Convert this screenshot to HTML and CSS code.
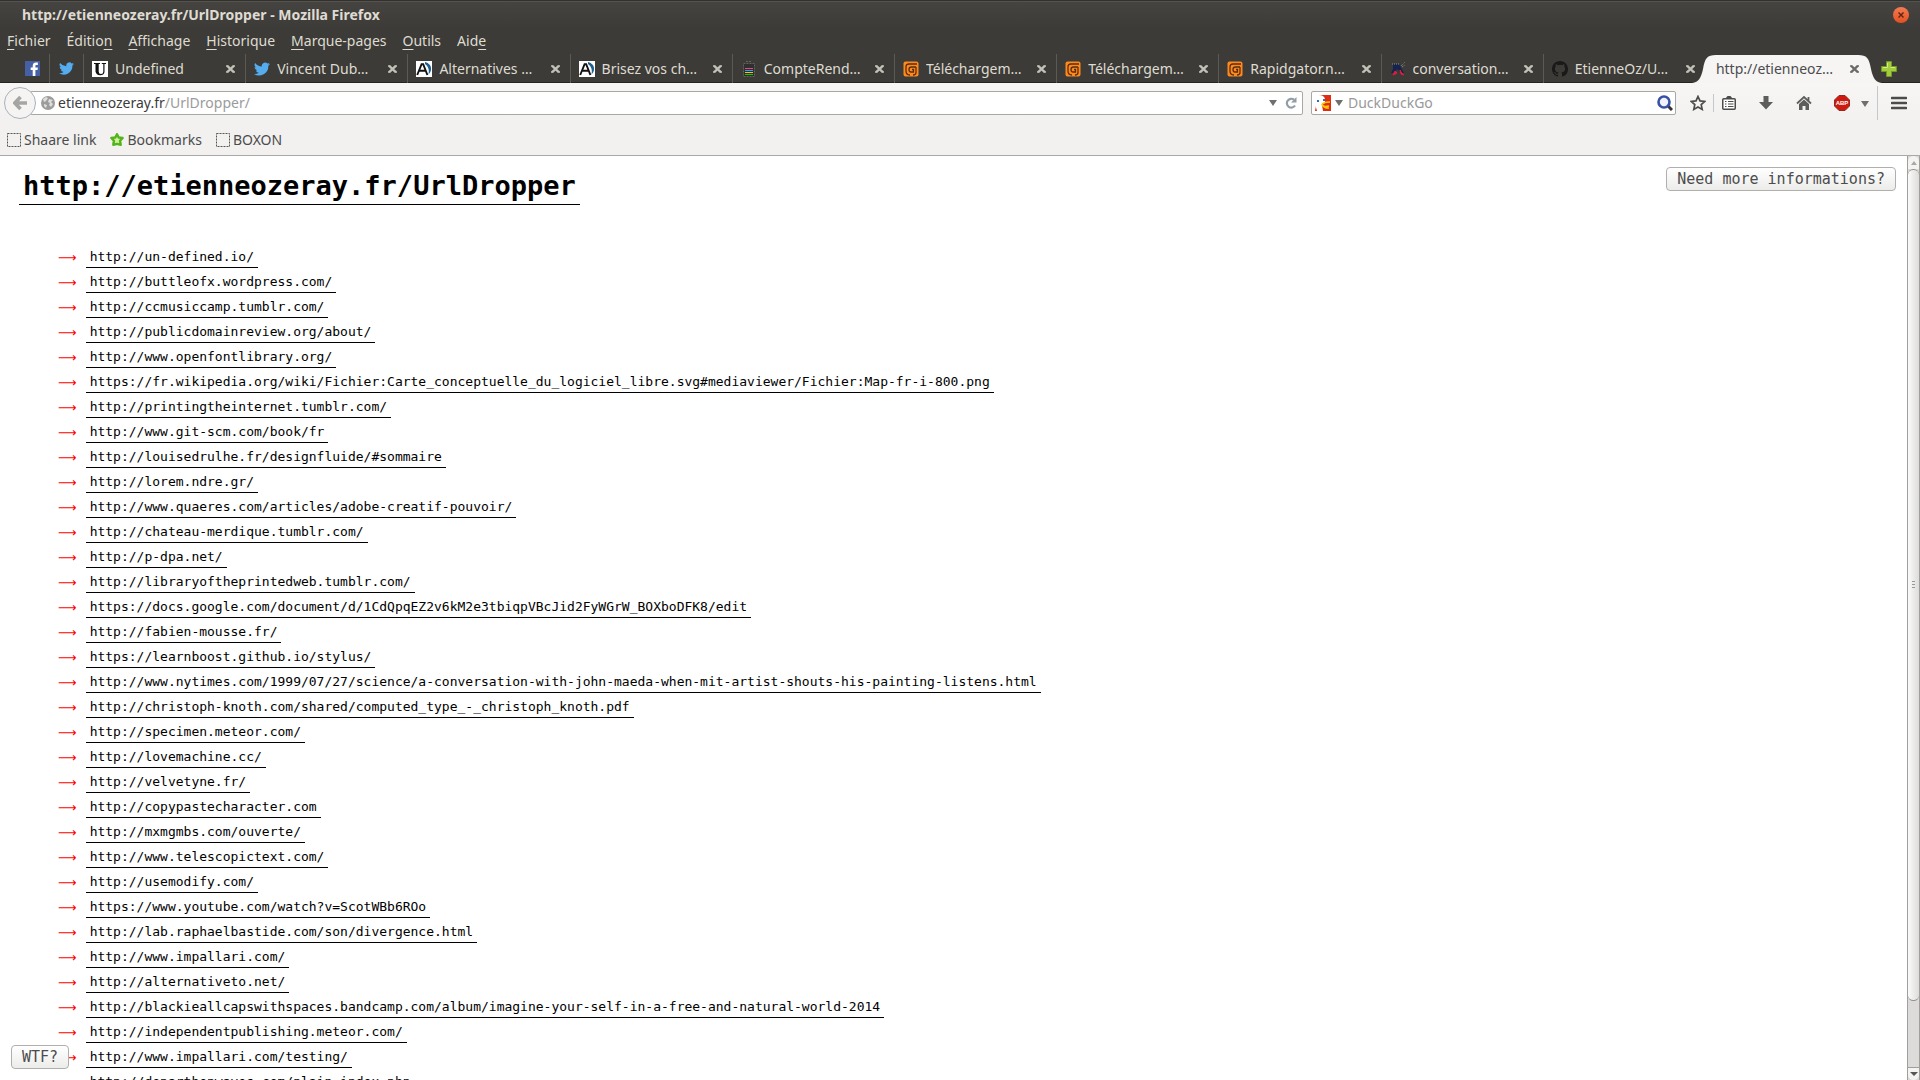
FILE: index.html
```html
<!DOCTYPE html>
<html lang="fr">
<head>
<meta charset="utf-8">
<title>http://etienneozeray.fr/UrlDropper - Mozilla Firefox</title>
<link rel="stylesheet" href="styles.css">
</head>
<body>
<svg class="defs" aria-hidden="true">
  <defs>
    <symbol id="close" viewBox="0 0 9 8"><path d="M1.2 .8 7.8 7.2M7.8 .8 1.2 7.2" stroke="currentColor" stroke-width="2.3"/><path d="M0 1h2M7 1h2M0 7h2M7 7h2" stroke="currentColor" stroke-width="1.6"/></symbol>
    <symbol id="twitter" viewBox="0 0 24 24"><path fill="#55acee" d="M24 4.6a10 10 0 0 1-2.8.8 5 5 0 0 0 2.1-2.7 10 10 0 0 1-3.1 1.2 4.9 4.9 0 0 0-8.4 4.5A14 14 0 0 1 1.7 3.1a4.9 4.9 0 0 0 1.5 6.6 4.9 4.9 0 0 1-2.2-.6v.1a4.9 4.9 0 0 0 3.9 4.8 5 5 0 0 1-2.2.1 4.9 4.9 0 0 0 4.6 3.4A9.9 9.9 0 0 1 0 19.5 14 14 0 0 0 21.5 7.1 10 10 0 0 0 24 4.6z"/></symbol>
    <symbol id="april" viewBox="0 0 16 16"><path fill="#fff" d="M0 0h16v16H0z"/><path d="M1.2 14 5.6 3.2h1.6L11.4 14M3.4 9.8h6" fill="none" stroke="#111" stroke-width="1.9"/><path fill="#1c5f92" d="M9 1c4 1 6.500 4 6 7.500-.2 2-1 3.500-2.500 5 1-4.500 0-8-3.500-10.500z"/></symbol>
    <symbol id="gator" viewBox="0 0 16 16"><rect x=".5" y=".5" width="15" height="15" rx="2" fill="#ff8a1c"/><path d="M14 3H6Q3 3 3 6v4q0 4 4 4M13 6H8.500Q6 6 6 8.500T8 11h2.500V8.500H9M13 6v5.500q0 2.500-3 2.500" fill="none" stroke="#5a2c10" stroke-width="1.3"/></symbol>
    <symbol id="down" viewBox="0 0 8 6"><path d="M0 0h8L4 6z" fill="#6f6f6c"/></symbol>
  </defs>
</svg>

<header class="chrome">
  <div class="titlebar">
    <span class="title">http://etienneozeray.fr/UrlDropper - Mozilla Firefox</span>
    <button class="window-close" aria-label="Fermer la fenêtre"><svg viewBox="0 0 16 16"><path d="M5.500 5.500l5 5M10.500 5.500l-5 5" stroke="#5b2415" stroke-width="1.4"/></svg></button>
  </div>
  <nav class="menubar">
    <button><u>F</u>ichier</button>
    <button>Éditio<u>n</u></button>
    <button><u>A</u>ffichage</button>
    <button><u>H</u>istorique</button>
    <button><u>M</u>arque-pages</button>
    <button><u>O</u>utils</button>
    <button>Aid<u>e</u></button>
  </nav>
  <div class="tabs">
    <button class="pinned first" aria-label="Facebook"><svg viewBox="0 0 14 14"><path fill="#4560a5" d="M0 0h14v14H0z"/><path fill="#fff" d="M7.200 14V8.300H5.300V6.100h1.900V4.600c0-2 1.200-3.100 3-3.100h1.800v2.200h-1.200c-.9 0-1.100.4-1.100 1.100v1.300H12l-.3 2.200h-2V14z"/></svg></button>
    <button class="pinned" aria-label="Twitter"><svg><use href="#twitter"/></svg></button>
    <div class="tab"><svg class="favicon" viewBox="0 0 16 16"><path fill="#fff" d="M0 0h16v16H0z"/><path fill="#111" d="M2 2h6v1H6.700v7.500q0 2.500 2.300 2.500t2.300-2.500V3H9.800V2H14v1h-1.500v7.500Q12.500 14.200 8.300 14.200T3.500 10.500V3H2z"/></svg><button class="label">Undefined</button><button class="close" aria-label="Fermer"><svg><use href="#close"/></svg></button></div>
    <div class="tab"><svg class="favicon"><use href="#twitter"/></svg><button class="label">Vincent Dub…</button><button class="close" aria-label="Fermer"><svg><use href="#close"/></svg></button></div>
    <div class="tab"><svg class="favicon"><use href="#april"/></svg><button class="label">Alternatives …</button><button class="close" aria-label="Fermer"><svg><use href="#close"/></svg></button></div>
    <div class="tab"><svg class="favicon"><use href="#april"/></svg><button class="label">Brisez vos ch…</button><button class="close" aria-label="Fermer"><svg><use href="#close"/></svg></button></div>
    <div class="tab"><svg class="favicon" viewBox="0 0 16 16"><path d="M2.500 2.500h11v13h-11zM5 .5h6" fill="#2f2f2d" stroke="#62625e" stroke-dasharray="2 1"/><path d="M4 7.500h8" stroke="#f0408c"/><path d="M4 9.500h8" stroke="#19a8f0"/><path d="M4 11.500h8" stroke="#f5c211"/><path d="M4 13.500h8" stroke="#16c60c"/></svg><button class="label">CompteRend…</button><button class="close" aria-label="Fermer"><svg><use href="#close"/></svg></button></div>
    <div class="tab"><svg class="favicon"><use href="#gator"/></svg><button class="label">Téléchargem…</button><button class="close" aria-label="Fermer"><svg><use href="#close"/></svg></button></div>
    <div class="tab"><svg class="favicon"><use href="#gator"/></svg><button class="label">Téléchargem…</button><button class="close" aria-label="Fermer"><svg><use href="#close"/></svg></button></div>
    <div class="tab"><svg class="favicon"><use href="#gator"/></svg><button class="label">Rapidgator.n…</button><button class="close" aria-label="Fermer"><svg><use href="#close"/></svg></button></div>
    <div class="tab"><svg class="favicon" viewBox="0 0 16 16"><path d="M3 3h6l5 9h-3L7 8l-3 4H1l2-4z" fill="#14244f"/><path d="M2 3h8M11 5l4-4M12 6l3-2" stroke="#8b8d92" stroke-dasharray="1 1"/><path d="M3 14l2-4 2 2zM10 9l1 2 3 3-3-1z" fill="#e8173d" stroke="#e8173d"/></svg><button class="label">conversation…</button><button class="close" aria-label="Fermer"><svg><use href="#close"/></svg></button></div>
    <div class="tab"><svg class="favicon" viewBox="0 0 16 16"><path fill="#191919" d="M8 0C3.580 0 0 3.580 0 8c0 3.540 2.290 6.530 5.470 7.590.4.070.55-.17.55-.38 0-.19-.01-.82-.01-1.490-2.010.37-2.530-.49-2.690-.94-.09-.23-.48-.94-.82-1.130-.28-.15-.68-.52-.01-.53.63-.01 1.080.58 1.230.82.72 1.210 1.870.87 2.330.66.07-.52.28-.87.51-1.070-1.780-.2-3.640-.89-3.640-3.950 0-.87.31-1.590.82-2.150-.08-.2-.36-1.020.08-2.120 0 0 .67-.21 2.200.82a7.600 7.600 0 0 1 4 0c1.530-1.040 2.200-.82 2.200-.82.44 1.100.16 1.920.08 2.120.51.56.82 1.270.82 2.150 0 3.070-1.870 3.750-3.650 3.950.29.25.54.73.54 1.480 0 1.070-.01 1.930-.01 2.200 0 .21.15.46.55.38A8 8 0 0 0 16 8c0-4.420-3.580-8-8-8z"/></svg><button class="label">EtienneOz/U…</button><button class="close" aria-label="Fermer"><svg><use href="#close"/></svg></button></div>
    <div class="tab active">
      <svg class="curve left" viewBox="0 0 24 29"><path fill="#f6f5f4" d="M0 29C7 28 9 24 11 15 13 4 15 1 24 1V29z"/></svg>
      <svg class="curve right" viewBox="0 0 24 29"><path fill="#f6f5f4" d="M24 29C17 28 15 24 13 15 11 4 9 1 0 1V29z"/></svg>
      <button class="label">http://etienneoz…</button><button class="close" aria-label="Fermer"><svg><use href="#close"/></svg></button>
    </div>
    <button class="new-tab" aria-label="Nouvel onglet"><svg viewBox="0 0 16 16"><path d="M5.500.5h5v5h5v5h-5v5h-5v-5h-5v-5h5z" fill="#a2cc3d" stroke="#6f9a23"/><path d="M6.500 2v4.500H2M14 6.500h-4.500" fill="none" stroke="#d3ea86"/></svg></button>
  </div>
</header>

<div class="toolbar">
  <button class="back" aria-label="Précédent"><svg viewBox="0 0 14 14"><path d="M7.500 1 1.700 7l5.800 6M2 7h12" fill="none" stroke="#a5a5a4" stroke-width="3.600"/></svg></button>
  <div class="urlbar">
    <svg class="globe" viewBox="0 0 14 14"><circle cx="7" cy="7" r="7" fill="#9c9c9b"/><path d="M2 3l3-2 2 1-2 3-2 1zM3 8l3 1-1 3-2-2zM8 3l4 1-2 2 2 2-2 3-2-2 1-2-2-1z" fill="#dededd"/></svg>
    <span class="address" role="textbox" aria-label="Adresse">etienneozeray.fr<span class="path">/UrlDropper/</span></span>
    <svg class="drop"><use href="#down"/></svg>
    <button class="reload" aria-label="Actualiser"><svg viewBox="0 0 12 12"><path d="M10 8.500A4.400 4.400 0 1 1 9 2.700" fill="none" stroke="#929ca6" stroke-width="2.200"/><path d="M11.500 0v5.500H6z" fill="#929ca6"/></svg></button>
  </div>
  <div class="searchbar">
    <svg class="duck" viewBox="0 0 16 16"><path fill="#e02c12" d="M1 0h15v16H1z"/><path fill="#fff" d="M0 0h4q5 0 6 4v4l-3 2 1 6H2L0 9z"/><path fill="#e02c12" d="M0 11l1 5H0z"/><path fill="#2a6fc4" d="M2 5h2v2H2zM8 4h2v2H8z"/><path d="M15 7q-7 0-8 2.500 1 3 7 1.500M7 10q3 3.500 7 3" fill="none" stroke="#ffc800" stroke-width="1.600"/></svg>
    <svg class="drop"><use href="#down"/></svg>
    <input type="text" placeholder="DuckDuckGo" aria-label="Rechercher">
    <button class="search" aria-label="Rechercher"><svg viewBox="0 0 16 16"><path d="M11 11l4 4" stroke="#333" stroke-width="3"/><circle cx="7" cy="7" r="5.500" fill="#eef3fb" stroke="#3b50a4" stroke-width="2.600"/></svg></button>
  </div>
  <div class="tools">
    <button aria-label="Marquer cette page"><svg viewBox="0 0 16 16"><path d="M8 1.500l2 4.400 4.800.5-3.600 3.200 1 4.800L8 12l-4.200 2.400 1-4.800L1.200 6.400 6 5.900z" fill="none" stroke="#4c4c4b" stroke-width="1.700"/></svg></button>
    <button class="split" aria-label="Marque-pages"><svg viewBox="0 0 16 16"><rect x="1.750" y="3.750" width="12.500" height="10.500" rx="1" fill="#fff" stroke="#4c4c4b" stroke-width="1.500"/><path d="M4.500 3.500 6.500 1h3l2 2.500z" fill="#4c4c4b"/><path d="M4 6.500h1.500M7 6.500h5.500M4 9h1.500M7 9h5.500M4 11.500h1.500M7 11.500h5.500" stroke="#4c4c4b"/></svg></button>
    <button aria-label="Téléchargements"><svg viewBox="0 0 16 16"><path d="M5.500 1h5v6H15l-7 7.500L1 7h4.500z" fill="#5d5d5c"/></svg></button>
    <button aria-label="Accueil"><svg viewBox="0 0 16 16"><path d="M1 8.500 8 2l7 6.500M12.500 2v4" fill="none" stroke="#5d5d5c" stroke-width="1.800"/><path d="M3 9l5-4.500L13 9v6H9.500v-4h-3v4H3z" fill="#5d5d5c"/></svg></button>
    <button aria-label="Adblock Plus"><svg viewBox="0 0 16 16"><path d="M5 .5h6L15.500 5v6L11 15.500H5L.5 11V5z" fill="#cf1b0e" stroke="#8f2c22"/><text x="8" y="10" class="abp">ABP</text></svg></button>
    <svg class="drop"><use href="#down"/></svg>
    <button class="menu" aria-label="Ouvrir le menu"><svg viewBox="0 0 16 14"><path d="M1 2h14M1 7h14M1 12h14" stroke="#4c4c4b" stroke-width="2.600" stroke-linecap="round"/></svg></button>
  </div>
</div>

<nav class="bookmarks">
  <a href="#"><svg viewBox="0 0 14 14"><rect x=".5" y=".5" width="13" height="13" fill="none" stroke="#555" stroke-dasharray="2 1"/></svg>Shaare link</a>
  <a href="#"><svg viewBox="0 0 14 14"><path d="M7 1.200l1.700 3.300 3.900.5-2.500 2.800.6 4L7 10.800l-3.700 1 .6-4L1.400 5l3.900-.5z" fill="#cdf09b" stroke="#53b31b" stroke-width="2.400" stroke-linejoin="round"/></svg>Bookmarks</a>
  <a href="#"><svg viewBox="0 0 14 14"><rect x=".5" y=".5" width="13" height="13" fill="none" stroke="#555" stroke-dasharray="2 1"/></svg>BOXON</a>
</nav>

<div class="viewport">
  <main class="page">
    <h1><a href="#">http://etienneozeray.fr/UrlDropper</a></h1>
    <button class="page-button info">Need more informations?</button>
    <ul class="links">
      <li><a href="#">http://un-defined.io/</a></li>
      <li><a href="#">http://buttleofx.wordpress.com/</a></li>
      <li><a href="#">http://ccmusiccamp.tumblr.com/</a></li>
      <li><a href="#">http://publicdomainreview.org/about/</a></li>
      <li><a href="#">http://www.openfontlibrary.org/</a></li>
      <li><a href="#">https://fr.wikipedia.org/wiki/Fichier:Carte_conceptuelle_du_logiciel_libre.svg#mediaviewer/Fichier:Map-fr-i-800.png</a></li>
      <li><a href="#">http://printingtheinternet.tumblr.com/</a></li>
      <li><a href="#">http://www.git-scm.com/book/fr</a></li>
      <li><a href="#">http://louisedrulhe.fr/designfluide/#sommaire</a></li>
      <li><a href="#">http://lorem.ndre.gr/</a></li>
      <li><a href="#">http://www.quaeres.com/articles/adobe-creatif-pouvoir/</a></li>
      <li><a href="#">http://chateau-merdique.tumblr.com/</a></li>
      <li><a href="#">http://p-dpa.net/</a></li>
      <li><a href="#">http://libraryoftheprintedweb.tumblr.com/</a></li>
      <li><a href="#">https://docs.google.com/document/d/1CdQpqEZ2v6kM2e3tbiqpVBcJid2FyWGrW_BOXboDFK8/edit</a></li>
      <li><a href="#">http://fabien-mousse.fr/</a></li>
      <li><a href="#">https://learnboost.github.io/stylus/</a></li>
      <li><a href="#">http://www.nytimes.com/1999/07/27/science/a-conversation-with-john-maeda-when-mit-artist-shouts-his-painting-listens.html</a></li>
      <li><a href="#">http://christoph-knoth.com/shared/computed_type_-_christoph_knoth.pdf</a></li>
      <li><a href="#">http://specimen.meteor.com/</a></li>
      <li><a href="#">http://lovemachine.cc/</a></li>
      <li><a href="#">http://velvetyne.fr/</a></li>
      <li><a href="#">http://copypastecharacter.com</a></li>
      <li><a href="#">http://mxmgmbs.com/ouverte/</a></li>
      <li><a href="#">http://www.telescopictext.com/</a></li>
      <li><a href="#">http://usemodify.com/</a></li>
      <li><a href="#">https://www.youtube.com/watch?v=ScotWBb6ROo</a></li>
      <li><a href="#">http://lab.raphaelbastide.com/son/divergence.html</a></li>
      <li><a href="#">http://www.impallari.com/</a></li>
      <li><a href="#">http://alternativeto.net/</a></li>
      <li><a href="#">http://blackieallcapswithspaces.bandcamp.com/album/imagine-your-self-in-a-free-and-natural-world-2014</a></li>
      <li><a href="#">http://independentpublishing.meteor.com/</a></li>
      <li><a href="#">http://www.impallari.com/testing/</a></li>
      <li><a href="#">http://departhenwaves.com/plain_index.php</a></li>
    </ul>
    <button class="page-button wtf">WTF?</button>
  </main>
  <div class="scrollbar" aria-hidden="true">
    <span class="arrow up"><svg viewBox="0 0 8 6"><path d="M1 5h6L4 1z" fill="#aaa9a6"/></svg></span>
    <span class="thumb"><i></i><i></i><i></i></span>
    <span class="arrow bottom"><svg viewBox="0 0 8 6"><path d="M0 1h8L4 5z" fill="#555"/></svg></span>
  </div>
</div>
</body>
</html>
```

FILE: styles.css
```css
* { box-sizing: border-box; }

body {
  margin: 0;
  height: 100vh;
  display: flex;
  flex-direction: column;
  overflow: hidden;
  background: #fff;
  color: #4c4c4c;
  font: 14px/20px "Noto Sans", "Open Sans", sans-serif;
}

button {
  margin: 0;
  padding: 0;
  border: 0;
  background: none;
  color: inherit;
  font: inherit;
}

svg { display: block; flex: none; }
.defs { position: absolute; width: 0; height: 0; }

/* Window frame */
.chrome {
  flex: none;
  color: #dfdbd2;
  background: linear-gradient(#454440, #3c3b37 28px);
  border-top: 1px solid #32312e;
}

.titlebar {
  display: flex;
  justify-content: space-between;
  align-items: center;
  height: 26px;
  padding: 0 11px 0 22px;
  border-top: 1px solid #53524d;
}
.title { font-weight: 700; }
.window-close {
  width: 16px;
  height: 16px;
  border-radius: 50%;
  background: linear-gradient(#f47b55, #e2501f);
}

.menubar {
  display: flex;
  gap: 16px;
  height: 27px;
  padding: 0 7px;
}
.menubar u { text-underline-offset: 3px; }

/* Tabs */
.tabs {
  display: flex;
  height: 29px;
  padding-right: 23px;
  box-shadow: inset 0 -1px #262522;
}
.pinned {
  display: flex;
  align-items: center;
  justify-content: center;
  width: 34px;
}
.pinned.first { width: 49px; padding-left: 15px; }
.pinned svg { width: 15px; height: 15px; }
.pinned + .pinned, .tab {
  border-left: 1px solid #5b5a55;
}
.tab {
  position: relative;
  display: flex;
  align-items: center;
  flex: 1 1 0;
  min-width: 0;
  padding: 0 10px 0 8px;
}
.favicon { width: 16px; height: 16px; margin-right: 7px; }
.label {
  flex: 1;
  overflow: hidden;
  white-space: nowrap;
  text-align: left;
}
.close { color: #c3c0b8; }
.close svg { width: 9px; height: 8px; }
.tab.active {
  padding-left: 11px;
  border: 0;
  color: #4c4c4c;
}
.tab.active::before {
  content: "";
  position: absolute;
  inset: 1px 10px 0;
  background: #f6f5f4;
}
.tab.active .label, .tab.active .close { position: relative; }
.tab.active .close { color: #6b6b69; }
.curve { position: absolute; top: 0; width: 24px; height: 29px; }
.curve.left { left: -13px; }
.curve.right { right: -13px; }
.new-tab { width: 28px; padding-left: 12px; }
.new-tab svg { width: 16px; height: 16px; }

/* Navigation toolbar */
.toolbar {
  flex: none;
  display: flex;
  align-items: center;
  height: 40px;
  padding: 0 13px 0 4px;
  background: linear-gradient(#f7f6f5, #f2f1f0);
}
.back {
  z-index: 1;
  display: grid;
  place-items: center;
  width: 32px;
  height: 32px;
  margin-right: -6px;
  border: 1px solid #a9b2ba;
  border-radius: 50%;
  background: #f5f4f3;
}
.back svg { width: 14px; height: 14px; }
.urlbar, .searchbar {
  display: flex;
  align-items: center;
  height: 24px;
  border: 1px solid #a8a8a5;
  border-radius: 2px;
  background: #fff;
}
.urlbar { flex: 1; padding: 0 5px 0 10px; }
.globe { width: 14px; height: 14px; margin-right: 3px; }
.address { flex: 1; color: #3c3c3c; }
.path { color: #9b9b9b; }
.drop { width: 8px; height: 6px; }
.reload { margin-left: 8px; }
.reload svg { width: 12px; height: 12px; }
.searchbar {
  flex: 0 1 365px;
  margin-left: 8px;
  padding: 0 2px 0 3px;
}
.duck { width: 16px; height: 16px; margin-right: 4px; }
.searchbar input {
  flex: 1;
  min-width: 0;
  padding: 0 5px;
  border: 0;
  outline: 0;
  background: none;
  font: inherit;
}
.searchbar input::placeholder { color: #999; }
.search svg { width: 16px; height: 16px; }

.tools {
  display: flex;
  align-items: center;
  margin-left: 14px;
}
.tools button {
  display: grid;
  place-items: center;
  width: 38px;
  height: 18px;
}
.tools button:first-child { width: 23px; justify-items: start; }
.tools svg { width: 16px; height: 16px; }
.tools .split { width: 34px; border-left: 1px solid #c3c8cd; padding-right: 3px; }
.tools .drop { width: 8px; height: 6px; margin: 2px 8px 0 0; }
.tools .menu {
  width: 30px;
  height: 34px;
  border-left: 1px solid #c3c8cd;
  justify-items: end;
}
.tools .menu svg { height: 14px; }
.abp {
  font: 700 6px "Liberation Sans", sans-serif;
  text-anchor: middle;
  fill: #fff;
}

/* Bookmarks */
.bookmarks {
  flex: none;
  display: flex;
  align-items: center;
  gap: 14px;
  height: 33px;
  padding: 2px 7px 0;
  background: #f2f1f0;
  border-bottom: 1px solid #aaa9a7;
}
.bookmarks a {
  display: flex;
  align-items: center;
  gap: 3px;
  color: inherit;
  text-decoration: none;
}
.bookmarks svg { width: 14px; height: 14px; }

/* Web page */
.viewport { flex: 1; min-height: 0; display: flex; }
.page {
  position: relative;
  flex: 1;
  overflow: hidden;
  padding: 11px 19px;
  color: #000;
  font: 13px/25px "DejaVu Sans Mono", monospace;
}
.page a {
  display: inline-block;
  padding: 0 4px;
  border-bottom: 1px solid #000;
  color: inherit;
  text-decoration: none;
}
h1 {
  margin: 0 0 40px;
  font-size: 27px;
  line-height: 37px;
}
.links {
  margin: 0;
  padding: 0 0 0 39px;
  list-style: none;
}
.links li { display: flex; align-items: center; gap: 9px; height: 25px; }
.links li::before {
  content: "⟶";
  color: #f00;
  font-family: "DejaVu Sans", sans-serif;
}
.links a { line-height: 20px; }

.page-button {
  position: absolute;
  height: 24px;
  padding: 0 10px;
  border: 1px solid #b0afac;
  border-radius: 4px;
  background: linear-gradient(#fff, #ececeb);
  color: #4c4c4c;
  font-size: 15px;
  line-height: 20px;
}
.info { top: 11px; right: 11px; }
.wtf { bottom: 11px; left: 11px; }

.scrollbar {
  display: flex;
  flex-direction: column;
  width: 13px;
  background: #dcdbd9;
  border: 1px solid #a09f9c;
  border-width: 0 1px;
}
.arrow {
  display: grid;
  place-items: center;
  height: 13px;
  background: #f4f3f2;
}
.arrow svg { width: 8px; height: 6px; }
.up { border-radius: 6px 6px 0 0; }
.bottom { border-radius: 0 0 6px 6px; border-top: 1px solid #a09f9c; }
.thumb {
  display: flex;
  flex-direction: column;
  justify-content: center;
  align-items: center;
  gap: 2px;
  height: 90%;
  margin-bottom: auto;
  border: 1px solid #8f8e8b;
  border-width: 1px 0;
  border-radius: 6px;
  background: linear-gradient(90deg, #fbfbfa, #dddcda);
}
.thumb i { width: 3px; height: 1px; background: #999; }
```
